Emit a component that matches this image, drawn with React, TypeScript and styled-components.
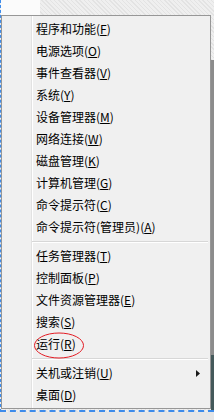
import React from 'react';
import styled, { createGlobalStyle } from 'styled-components';

const GlobalStyle = createGlobalStyle`
  html, body {
    margin: 0;
    padding: 0;
  }
  body {
    font-family: "Noto Sans CJK SC", "Liberation Sans", sans-serif;
    background: #e9e9e9;
  }
`;

interface MenuItemData {
  label: string;
  key: string;
  submenu?: boolean;
  circled?: boolean;
}

const groups: MenuItemData[][] = [
  [
    { label: '程序和功能', key: 'F' },
    { label: '电源选项', key: 'O' },
    { label: '事件查看器', key: 'V' },
    { label: '系统', key: 'Y' },
    { label: '设备管理器', key: 'M' },
    { label: '网络连接', key: 'W' },
    { label: '磁盘管理', key: 'K' },
    { label: '计算机管理', key: 'G' },
    { label: '命令提示符', key: 'C' },
    { label: '命令提示符(管理员)', key: 'A' },
  ],
  [
    { label: '任务管理器', key: 'T' },
    { label: '控制面板', key: 'P' },
    { label: '文件资源管理器', key: 'E' },
    { label: '搜索', key: 'S' },
    { label: '运行', key: 'R', circled: true },
  ],
  [
    { label: '关机或注销', key: 'U', submenu: true },
    { label: '桌面', key: 'D' },
  ],
];

function App() {
  return (
    <>
      <GlobalStyle />
      <Page>
        <Desk>
          <Menu>
            {groups.map((group, gi) => (
              <React.Fragment key={gi}>
                {gi > 0 && <Separator />}
                {group.map((item) => (
                  <Row key={item.label}>
                    <Label>
                      {item.label}(<Key>{item.key}</Key>)
                    </Label>
                    {item.submenu && (
                      <Arrow width="4" height="7" viewBox="0 0 4 7">
                        <path d="M0 0 L4 3.5 L0 7 Z" fill="#1a1a1a" />
                      </Arrow>
                    )}
                    {item.circled && (
                      <Circle width="52" height="28" viewBox="0 0 52 28">
                        <ellipse
                          cx="26"
                          cy="13.5"
                          rx="24.5"
                          ry="12.5"
                          fill="none"
                          stroke="#e31b23"
                          strokeWidth="1"
                        />
                      </Circle>
                    )}
                  </Row>
                ))}
              </React.Fragment>
            ))}
          </Menu>
        </Desk>
      </Page>
    </>
  );
}

const Page = styled.div`
  width: 214px;
  height: 420px;
  overflow: hidden;
  background: #e6e6e6;
`;

const Desk = styled.div`
  height: 395px;
  padding-top: 15px;
  border-left: 1px dashed #3d8bea;
  border-bottom: 2px dashed #3d8bea;
  background:
    linear-gradient(#fbfbfb, #fbfbfb) 0 0 / 39px 15px no-repeat,
    linear-gradient(
        to bottom,
        transparent 0,
        transparent 60px,
        #8c8c8c 60px,
        #8c8c8c 355px,
        #44595a 355px
      )
      right top / 3px 100% no-repeat,
    repeating-linear-gradient(45deg, #e3e3e3 0 1px, #efefef 1px 3px);
`;

const Menu = styled.div`
  width: 210px;
  box-sizing: border-box;
  border: 1px solid #979797;
  padding: 2px;
  background:
    linear-gradient(
      to right,
      transparent 29px,
      #e2e2e2 29px,
      #e2e2e2 30px,
      #ffffff 30px,
      #ffffff 31px,
      transparent 31px
    ),
    #f0f0f0;
`;

const Row = styled.div`
  position: relative;
  display: flex;
  align-items: center;
  height: 22px;
  padding-left: 32px;
  padding-right: 8px;
`;

const Label = styled.span`
  font-size: 12px;
  line-height: 22px;
  color: #000;
  white-space: nowrap;
`;

const Key = styled.span`
  text-decoration: underline;
  text-underline-offset: 1px;
`;

const Arrow = styled.svg`
  margin-left: auto;
  display: block;
`;

const Circle = styled.svg`
  position: absolute;
  left: 29px;
  top: -1px;
  overflow: visible;
`;

const Separator = styled.div`
  height: 1px;
  margin: 3px 0 2px 28px;
  background: #d7d7d7;
  border-bottom: 1px solid #ffffff;
`;

export default App;
